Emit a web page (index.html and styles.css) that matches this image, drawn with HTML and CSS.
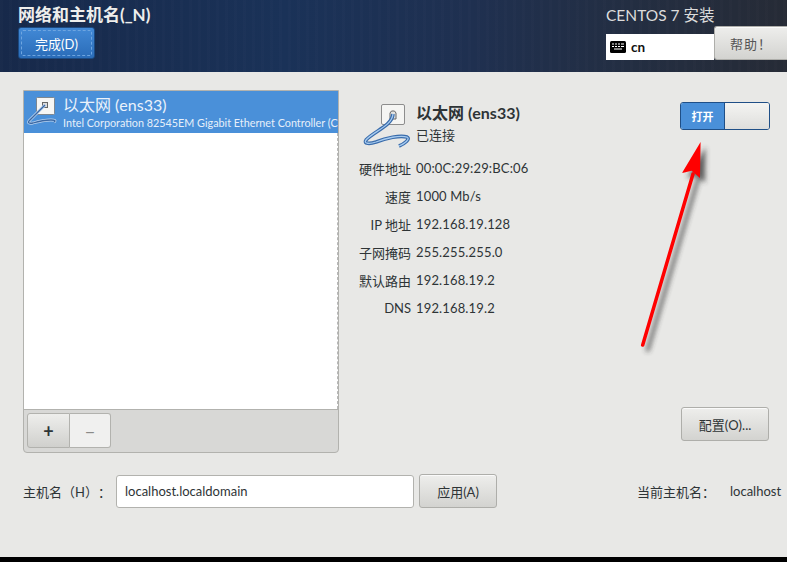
FILE: index.html
```html
<!DOCTYPE html>
<html lang="zh">
<head>
    <meta charset="UTF-8">
    <meta name="viewport" content="width=device-width, initial-scale=1.0">
    <title>网络和主机名</title>
    <link rel="stylesheet" href="styles.css">
</head>
<body>
    <div class="screen">
        <header class="topbar">
            <div class="topbar-left">
                <h1 class="page-title">网络和主机名(_N)</h1>
                <button class="done-btn"><span class="done-inner">完成(D)</span></button>
            </div>
            <div class="topbar-right">
                <div class="product">CENTOS 7 安装</div>
                <div class="topbar-tools">
                    <div class="layout-box">
                        <svg class="kbd-icon" width="16" height="12" viewBox="0 0 16 12">
                            <rect width="16" height="12" rx="1.5" fill="#000"/>
                            <path d="M2 3h2M5 3h2M8 3h2M11 3h3M2 5.5h2M5 5.5h2M8 5.5h2M11 5.5h3M4 8h8" stroke="#fff" stroke-width="1.2"/>
                        </svg>
                        <span>cn</span>
                    </div>
                    <button class="btn help-btn">帮助！</button>
                </div>
            </div>
        </header>

        <main class="content">
            <div class="columns">
                <section class="device-panel">
                    <div class="device-list">
                        <div class="device-row">
                            <svg class="plug-small" width="36" height="32" viewBox="0 0 36 32">
                                <rect x="9.5" y="2.5" width="18" height="17" rx="1" fill="#f6f6f4" stroke="#7d8790"/>
                                <rect x="15.5" y="7.5" width="5" height="5" fill="#ddd" stroke="#666"/>
                                <path d="M18 10 L2 26 Q0 29 6 28 Q16 25 24 25 Q30 25 27 27" fill="none" stroke="#b9d2ee" stroke-width="2.8"/>
                                <path d="M18 10 L2 26 Q0 29 6 28 Q16 25 24 25 Q30 25 27 27" fill="none" stroke="#3a68a4" stroke-width="1.3"/>
                            </svg>
                            <div class="device-text">
                                <div class="device-name">以太网 (ens33)</div>
                                <div class="device-desc">Intel Corporation 82545EM Gigabit Ethernet Controller (C</div>
                            </div>
                        </div>
                        <div class="list-edge"></div>
                    </div>
                    <div class="device-tools">
                        <button class="tool-btn add-btn">+</button>
                        <button class="tool-btn remove-btn">−</button>
                    </div>
                </section>

                <section class="detail-panel">
                    <div class="detail-head">
                        <div class="detail-main">
                            <svg class="plug-large" width="50" height="48" viewBox="0 0 50 48">
                                <rect x="19.5" y="2.5" width="23" height="20" rx="1.5" fill="#f5f5f3" stroke="#8d8d8d"/>
                                <path d="M28 17v-6l1.5-2h3l1.5 2v6z" fill="#e4e4e2" stroke="#666"/>
                                <path d="M31 12 C30 24 12 29 4 38 C1 42 8 42 14 40 C24 36 38 33 45 35 C49 37 42 42 37 44" fill="none" stroke="#3a6cab" stroke-width="3.6"/>
                                <path d="M31 12 C30 24 12 29 4 38 C1 42 8 42 14 40 C24 36 38 33 45 35 C49 37 42 42 37 44" fill="none" stroke="#a8ccf0" stroke-width="1.3"/>
                            </svg>
                            <div>
                                <div class="detail-name">以太网 (ens33)</div>
                                <div class="detail-status">已连接</div>
                            </div>
                        </div>
                        <div class="switch">
                            <span class="switch-on">打开</span>
                            <span class="switch-knob"></span>
                        </div>
                    </div>
                    <dl class="props">
                        <dt>硬件地址</dt><dd>00:0C:29:29:BC:06</dd>
                        <dt>速度</dt><dd>1000 Mb/s</dd>
                        <dt>IP 地址</dt><dd>192.168.19.128</dd>
                        <dt>子网掩码</dt><dd>255.255.255.0</dd>
                        <dt>默认路由</dt><dd>192.168.19.2</dd>
                        <dt>DNS</dt><dd>192.168.19.2</dd>
                    </dl>
                    <div class="detail-actions">
                        <button class="btn config-btn">配置(O)...</button>
                    </div>
                </section>
            </div>

            <div class="host-row">
                <label class="host-label" for="hostname">主机名（H）：</label>
                <input class="host-input" id="hostname" type="text" value="localhost.localdomain">
                <button class="btn apply-btn">应用(A)</button>
                <div class="current-host">
                    <span class="current-label">当前主机名：</span>
                    <span>localhost</span>
                </div>
            </div>
        </main>

        <footer class="bottom-strip"></footer>

        <!-- annotation drawn on top of the screenshot -->
        <svg class="arrow" width="787" height="562" viewBox="0 0 787 562">
            <defs>
                <filter id="arrowShadow" x="-50%" y="-20%" width="200%" height="140%">
                    <feGaussianBlur stdDeviation="2.5"/>
                </filter>
            </defs>
            <g transform="translate(5 5)" fill="#333" opacity="0.75" filter="url(#arrowShadow)">
                <path d="M642.7 345 L693 174" stroke="#333" stroke-width="3.5" stroke-linecap="round"/>
                <path d="M700.6 142 L700 178 L691.7 170.7 L682 173 Z"/>
            </g>
            <path d="M642.7 345 L693 174" stroke="#f00" stroke-width="3.5" stroke-linecap="round"/>
            <path d="M700.6 142 L700 178 L691.7 170.7 L682 173 Z" fill="#f00"/>
        </svg>
    </div>
</body>
</html>
```

FILE: styles.css
```css
* {
    box-sizing: border-box;
}

body {
    margin: 0;
    font-family: Lato, "Noto Sans CJK SC", sans-serif;
    font-size: 13px;
    color: #2e3436;
    background: #000;
}

button {
    font-family: inherit;
    font-size: 13px;
    color: #2e3436;
}

.screen {
    position: relative;
    width: 787px;
    height: 562px;
    display: flex;
    flex-direction: column;
    overflow: hidden;
    background: #e8e8e6;
}

/* top bar */
.topbar {
    height: 72px;
    flex: none;
    display: flex;
    justify-content: space-between;
    padding-left: 18px;
    color: #fff;
    background:
        repeating-linear-gradient(90deg, rgba(255, 255, 255, 0.012) 0 3px, transparent 3px 9px),
        linear-gradient(90deg, #17294a 0%, #1a3258 36%, #1f3050 60%, #232e42 80%, #262b36 100%);
}

.page-title {
    margin: 5px 0 3px;
    font-size: 17px;
    line-height: 19px;
    font-weight: bold;
    color: #eeeeec;
}

.done-btn {
    display: block;
    width: 77px;
    height: 32px;
    padding: 2px;
    border: 1px solid #1b4a82;
    border-radius: 3px;
    color: #fff;
    background: linear-gradient(#4289d6, #2a6cb8);
}

.done-inner {
    display: flex;
    align-items: center;
    justify-content: center;
    height: 100%;
    border: 1px dashed #6ea5e0;
    border-radius: 2px;
}

.topbar-right {
    width: 181px;
    display: flex;
    flex-direction: column;
}

.product {
    margin-top: 5px;
    height: 21px;
    font-size: 15.5px;
    line-height: 20px;
    color: #dcdcdc;
}

.topbar-tools {
    display: flex;
}

.layout-box {
    width: 108px;
    height: 26px;
    margin-top: 8px;
    padding-left: 4px;
    display: flex;
    align-items: center;
    gap: 5px;
    font-size: 13.5px;
    font-weight: bold;
    color: #111;
    background: #fff;
}

.btn {
    border: 1px solid #aeaeaa;
    border-radius: 3px;
    background: linear-gradient(#eeeeec, #d3d3d0);
    box-shadow: inset 0 1px 0 #fafafa;
}

.help-btn {
    width: 73px;
    height: 34px;
    border-right: 0;
    border-radius: 3px 0 0 3px;
    font-family: Lato, "Noto Sans CJK JP", sans-serif;
    letter-spacing: 1px;
    color: #555;
}

/* main area */
.content {
    flex: 1;
    padding: 18px 0 0 23px;
}

.columns {
    display: flex;
    height: 363px;
}

.device-panel {
    width: 316px;
    display: flex;
    flex-direction: column;
    border: 1px solid #b2b2ae;
    border-radius: 0 0 4px 4px;
    background: #d8d8d6;
}

.device-list {
    position: relative;
    height: 319px;
    flex: none;
    background: #fff;
    border-bottom: 1px solid #b2b2ae;
    overflow: hidden;
}

.list-edge {
    position: absolute;
    top: 42px;
    right: 0;
    bottom: 0;
    border-right: 1px dashed #b8b8b8;
}

.device-row {
    height: 42px;
    display: flex;
    padding: 4px 0 0 3px;
    color: #fff;
    background: #4a90d9;
    white-space: nowrap;
}

.plug-small {
    flex: none;
}

.device-name {
    font-size: 16px;
    line-height: 20px;
    color: #eaf2fb;
}

.device-desc {
    font-size: 10.8px;
    line-height: 15px;
    color: #e6eff9;
}

.device-tools {
    display: flex;
    padding: 3px 0 0 3px;
}

.tool-btn {
    height: 35px;
    padding: 0;
    font-size: 18px;
    line-height: 1;
    border: 1px solid #b2b2ae;
}

.add-btn {
    width: 43px;
    font-weight: bold;
    border-radius: 3px 0 0 3px;
    background: linear-gradient(#eeeeec, #d0d0cd);
}

.remove-btn {
    width: 41px;
    border-left: 0;
    border-radius: 0 3px 3px 0;
    color: #8a8a88;
    background: #f0f0ef;
}

/* right side details */
.detail-panel {
    flex: 1;
    display: flex;
    flex-direction: column;
    padding: 12px 17px 0 16px;
}

.detail-head {
    display: flex;
    justify-content: space-between;
    height: 48px;
}

.detail-main {
    display: flex;
    gap: 4px;
    padding-left: 7px;
}

.plug-large {
    flex: none;
}

.detail-name {
    font-size: 16px;
    font-weight: bold;
    line-height: 20px;
    margin-top: 1px;
}

.detail-status {
    margin-top: 3px;
    line-height: 18px;
}

.switch {
    width: 90px;
    height: 28px;
    display: flex;
    border: 1px solid #1f4f87;
    border-radius: 3px;
    overflow: hidden;
}

.switch-on {
    width: 44px;
    display: flex;
    align-items: center;
    justify-content: center;
    font-size: 11px;
    font-weight: bold;
    color: #fff;
    background: #4a90d9;
    border-right: 1px solid #1f4f87;
}

.switch-knob {
    flex: 1;
    background: linear-gradient(#f4f4f2, #dededc);
}

.props {
    display: grid;
    grid-template-columns: 56px auto;
    grid-auto-rows: 28px;
    column-gap: 5px;
    align-items: center;
    margin: 4px 0 0;
}

.props dt {
    text-align: right;
    white-space: nowrap;
}

.props dd {
    margin: 0;
    letter-spacing: 0.15px;
}

.detail-actions {
    margin-top: auto;
    padding-bottom: 12px;
    display: flex;
    justify-content: flex-end;
    padding-right: 1px;
}

.config-btn {
    width: 88px;
    height: 34px;
}

/* host name row */
.host-row {
    display: flex;
    align-items: center;
    height: 34px;
    margin-top: 21px;
}

.host-label {
    width: 93px;
    font-family: Lato, "Noto Sans CJK JP", sans-serif;
    text-spacing-trim: space-all;
    white-space: nowrap;
}

.host-input {
    width: 298px;
    height: 33px;
    padding: 0 8px;
    border: 1px solid #b2b2ae;
    border-radius: 3px;
    font-family: inherit;
    font-size: 13px;
    color: #2e3436;
    background: #fff;
}

.apply-btn {
    width: 78px;
    height: 34px;
    margin-left: 5px;
}

.current-host {
    margin-left: 140px;
    display: flex;
    align-items: center;
    gap: 15px;
    white-space: nowrap;
}

.current-label {
    width: 78px;
    font-family: Lato, "Noto Sans CJK JP", sans-serif;
}

.bottom-strip {
    height: 5px;
    flex: none;
    background: #000;
}

.arrow {
    position: absolute;
    top: 0;
    left: 0;
    pointer-events: none;
}
```
